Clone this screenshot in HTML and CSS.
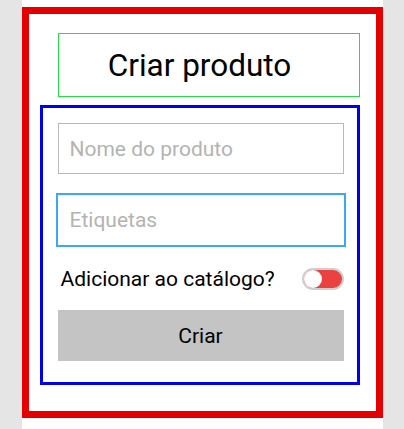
FILE: index.html
```html
<!DOCTYPE html>
<html lang="pt">
<head>
<meta charset="utf-8">
<link rel="stylesheet" href="styles.css">
</head>
<body>
<div class="page">
  <div class="frame">
    <div class="title-box"><h1 class="title">Criar produto</h1></div>
    <form class="form">
      <input class="field" type="text" placeholder="Nome do produto">
      <input class="field field-focus" type="text" placeholder="Etiquetas">
      <div class="toggle-row">
        <span class="toggle-label">Adicionar ao catálogo?</span>
        <span class="toggle"><span class="knob"></span></span>
      </div>
      <button class="submit" type="button">Criar</button>
    </form>
  </div>
</div>
</body>
</html>
```

FILE: styles.css
```css
* { box-sizing: border-box; }
html, body { margin: 0; padding: 0; }
body {
  background: #e5e5e5;
  font-family: Roboto, "Noto Sans", sans-serif;
  height: 429px;
  overflow: hidden;
}
.page {
  width: 361px;
  margin: 0 auto;
  background: #ffffff;
  height: 429px;
  padding-top: 7px;
}
.frame {
  border: 7px solid #e50000;
  height: 411px;
  padding-top: 19px;
}
.title-box {
  margin: 0 16px 0 29px;
  height: 64px;
  border: 1px solid #22e045;
  display: flex;
  align-items: center;
  justify-content: center;
  padding-right: 18px;
}
.title {
  margin: 0;
  font-size: 31.5px;
  font-weight: 400;
  color: #000;
}
.form {
  margin: 8px 16px 0 11px;
  border: 3px solid #0000ee;
  padding: 15px 13px 21px 15px;
  display: flex;
  flex-direction: column;
}
.field {
  height: 51px;
  border: 1px solid #b8b8b8;
  font-family: inherit;
  font-size: 21px;
  padding: 0 11px;
  color: #000;
  outline: none;
  background: #fff;
}
.field::placeholder { color: #b3b3b3; }
.field-focus {
  margin: 19px -2px 0 -2px;
  height: 54px;
  border: 2px solid #3aa8f2;
  padding: 0 12px;
}
.toggle-row {
  display: flex;
  align-items: center;
  justify-content: space-between;
  margin-top: 21px;
  height: 22px;
  padding-left: 3px;
}
.toggle-label {
  font-size: 21px;
  color: #000;
}
.toggle {
  width: 42px;
  height: 22px;
  border-radius: 11px;
  background: #ea4141;
  border: 2px solid #cfcfcf;
  display: flex;
  align-items: center;
}
.knob {
  width: 18px;
  height: 18px;
  border-radius: 50%;
  background: #fff;
}
.submit {
  margin-top: 20px;
  height: 51px;
  border: none;
  background: #c4c4c4;
  font-family: inherit;
  font-size: 21px;
  color: #000;
}
```
